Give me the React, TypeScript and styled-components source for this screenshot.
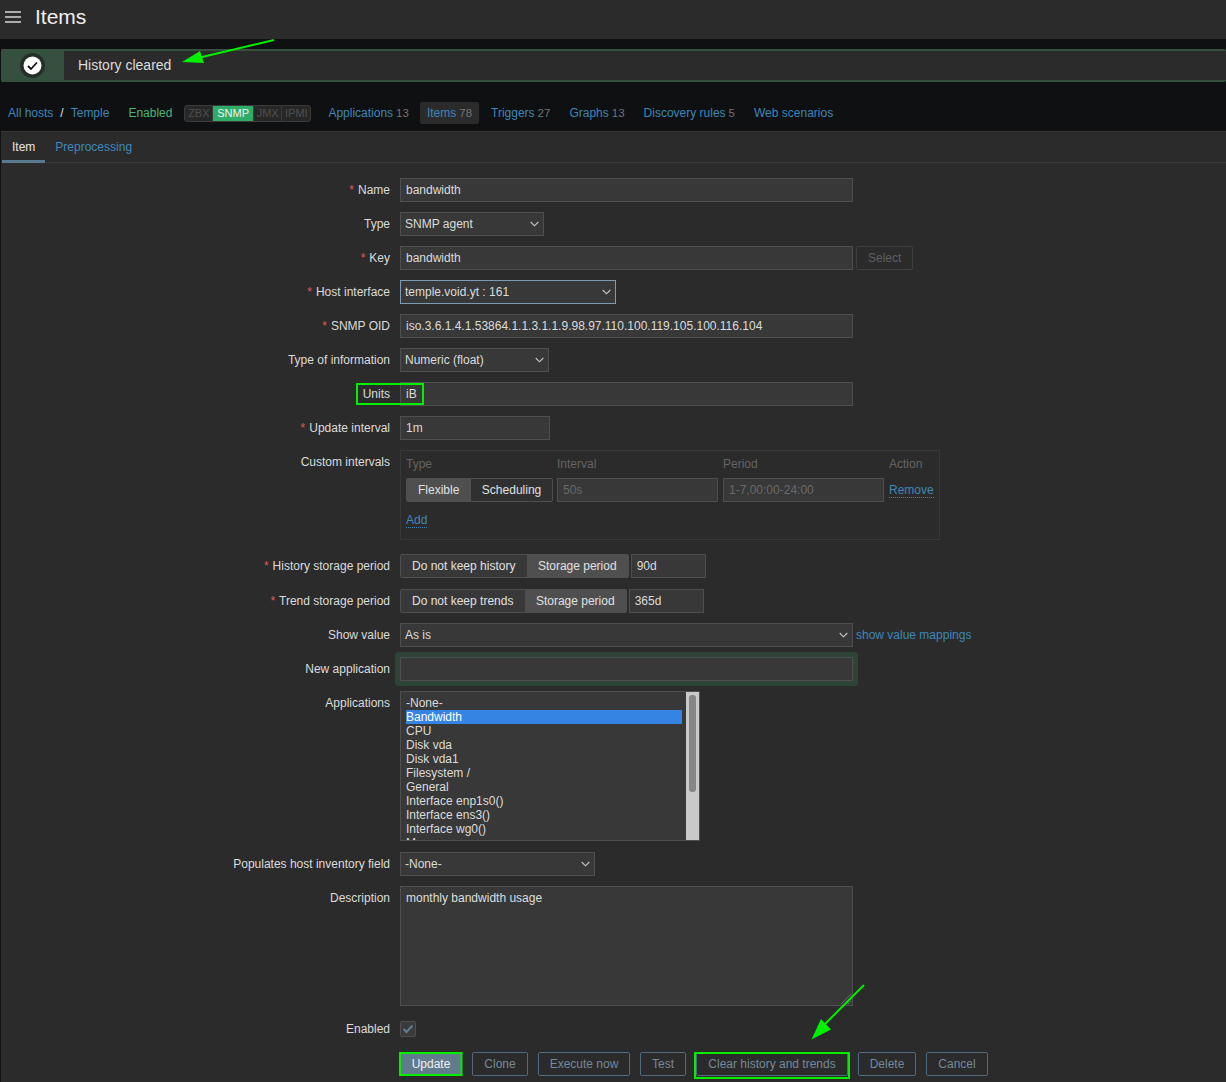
import React from "react";
import styled, { createGlobalStyle, css } from "styled-components";

const GlobalStyle = createGlobalStyle`
  html, body {
    margin: 0;
    padding: 0;
    background: #0e1012;
    overflow: hidden;
  }
  * {
    box-sizing: border-box;
  }
`;

const Page = styled.div`
  position: relative;
  width: 1226px;
  height: 1082px;
  overflow: hidden;
  background: #0e1012;
  color: #dedede;
  font-family: "Liberation Sans", Arial, sans-serif;
  font-size: 12px;
  line-height: 14px;
`;

const Header = styled.header`
  display: flex;
  align-items: center;
  height: 39px;
  padding-left: 5px;
  background: #2b2b2b;
`;

const MenuIcon = styled.svg`
  margin-bottom: 6px;
`;

const PageTitle = styled.h1`
  margin: 0 0 5px 14px;
  font-size: 21px;
  line-height: 24px;
  font-weight: normal;
  color: #f0f0f0;
`;

const Message = styled.div`
  display: flex;
  align-items: stretch;
  height: 33px;
  margin: 10px 0 0 1px;
  border: 2px solid #36503f;
  border-right: 0;
  border-radius: 2px;
  background: #2b2b2b;
`;

const MessageIcon = styled.div`
  display: flex;
  align-items: center;
  justify-content: center;
  width: 61px;
  padding-right: 2px;
  background: #36503f;
`;

const MessageText = styled.div`
  align-self: center;
  margin: 0 0 2px 14px;
  font-size: 14px;
  color: #dcdcdc;
`;

const Nav = styled.nav`
  display: flex;
  align-items: center;
  height: 22px;
  margin-top: 20px;
  padding-left: 8px;
`;

const Link = styled.a`
  color: #3f87b8;
`;

const Slash = styled.span`
  margin: 0 7px 0 7px;
  color: #e0e0e0;
`;

const EnabledState = styled.span`
  margin-left: 19px;
  color: #4fb477;
`;

const Tags = styled.div`
  display: flex;
  height: 17px;
  margin: 0 10px 0 12px;
  border: 1px solid #3a3a3a;
  border-radius: 3px;
  background: #272727;
`;

const Tag = styled.span<{ $on?: boolean }>`
  padding: 0 2.7px;
  font-size: 11px;
  line-height: 15px;
  color: #4f4f4f;
  ${(p) =>
    p.$on
      ? css`
          padding: 0 4px;
          background: #2fac68;
          color: #f2f2f2;
        `
      : css`
          & + & {
            border-left: 1px solid #3a3a3a;
          }
        `}
`;

const NavItem = styled.div<{ $active?: boolean }>`
  display: flex;
  align-items: center;
  height: 22px;
  margin-right: 5px;
  padding: 0 7px;
  border-radius: 2px;
  background: ${(p) => (p.$active ? "#2b2b2b" : "transparent")};
  ${Tags} + & {
    margin-right: 4px;
  }
`;

const Count = styled.span`
  margin-left: 3px;
  font-size: 11.5px;
  color: #727272;
`;

const Panel = styled.main`
  height: 951px;
  margin: 7px 0 0 1px;
  background: #2b2b2b;
  border-top: 1px solid #383838;
`;

const Tabs = styled.div`
  display: flex;
  height: 31px;
  padding-left: 1px;
  border-bottom: 1px solid #383838;
`;

const Tab = styled.div<{ $active?: boolean }>`
  display: flex;
  align-items: center;
  height: 31px;
  padding: 1px 10px 0;
  border-bottom: 3px solid ${(p) => (p.$active ? "#597a8e" : "transparent")};
  color: ${(p) => (p.$active ? "#e6e6e6" : "#3f87b8")};
`;

const Form = styled.form`
  display: flex;
  flex-direction: column;
  gap: 10px;
  padding-top: 15px;
`;

const Row = styled.div<{ $after?: number; $height?: number }>`
  display: grid;
  grid-template-columns: 389px 1fr;
  column-gap: 10px;
  margin-bottom: ${(p) => p.$after ?? 0}px;
  min-height: ${(p) => p.$height ?? 24}px;
`;

const Label = styled.label<{ $top?: boolean }>`
  display: flex;
  justify-content: flex-end;
  align-items: ${(p) => (p.$top ? "flex-start" : "center")};
  padding-top: ${(p) => (p.$top ? "5px" : "0")};
  height: ${(p) => (p.$top ? "auto" : "24px")};
  color: #dcdcdc;
`;

const Star = styled.span`
  margin-right: 4px;
  color: #e45959;
`;

const Field = styled.div`
  display: flex;
  align-items: flex-start;
`;

const fieldBox = css`
  height: 24px;
  border: 1px solid #4f4f4f;
  background: #383838;
  color: #dcdcdc;
`;

const Input = styled.div<{ $width: number; $disabled?: boolean; $ml?: number }>`
  ${fieldBox}
  display: flex;
  align-items: center;
  flex: none;
  width: ${(p) => p.$width}px;
  margin-left: ${(p) => p.$ml ?? 0}px;
  padding: 0 5px;
  color: ${(p) => (p.$disabled ? "#6a6a6a" : "#dcdcdc")};
`;

const GlowInput = styled(Input)`
  border-radius: 1px;
  box-shadow: 0 0 0 5px #2e4436;
`;

const Select = styled.div<{ $width: number; $focus?: boolean }>`
  ${fieldBox}
  display: flex;
  align-items: center;
  justify-content: space-between;
  width: ${(p) => p.$width}px;
  padding: 0 4px 0 4px;
  border-color: ${(p) => (p.$focus ? "#7d9cb3" : "#4f4f4f")};
`;

const GhostButton = styled.div`
  display: flex;
  align-items: center;
  height: 24px;
  margin-left: 3px;
  padding: 0 11px;
  border: 1px solid #3f3f3f;
  border-radius: 2px;
  color: #5f5f5f;
`;

const SideLink = styled.a`
  align-self: center;
  margin-left: 3px;
  color: #3f87b8;
`;

const IntervalBox = styled.div`
  display: grid;
  grid-template-columns: 151px 166px 166px auto;
  grid-template-rows: 27px 24px 37px;
  width: 540px;
  height: 90px;
  padding-left: 5px;
  border: 1px solid #383838;
  color: #646464;
`;

const ColHead = styled.div`
  align-self: center;
  padding-bottom: 2px;
`;

const DottedLink = styled.a`
  align-self: center;
  justify-self: start;
  color: #3f87b8;
  border-bottom: 1px dotted #3f87b8;
`;

const AddLink = styled(DottedLink)`
  grid-column: 1;
`;

const Segments = styled.div`
  display: flex;
  flex: none;
  height: 24px;
  border: 1px solid #4f4f4f;
  border-radius: 2px;
`;

const TypeSwitch = styled(Segments)`
  width: 147px;
`;

const Segment = styled.div<{ $on?: boolean }>`
  display: flex;
  align-items: center;
  padding: 0 11px;
  background: ${(p) => (p.$on ? "#4f4f4f" : "#383838")};
  color: #e0e0e0;
  &:first-child {
    padding-right: 11.5px;
  }
`;

const DarkSegment = styled(Segment)`
  background: ${(p) => (p.$on ? "#4f4f4f" : "#303030")};
`;

const ListBox = styled.div`
  display: flex;
  width: 300px;
  height: 150px;
  overflow: hidden;
  border: 1px solid #4f4f4f;
  background: #383838;
`;

const ListItems = styled.div`
  flex: 1;
  min-width: 0;
  padding: 4px 4px 0 5px;
`;

const ListItem = styled.div<{ $selected?: boolean }>`
  height: 14px;
  background: ${(p) => (p.$selected ? "#3584e4" : "transparent")};
  color: ${(p) => (p.$selected ? "#ffffff" : "#dcdcdc")};
`;

const ScrollTrack = styled.div`
  flex: none;
  width: 13px;
  padding: 3px 3px 0;
  background: #c9c9c9;
`;

const ScrollThumb = styled.div`
  height: 97px;
  border-radius: 3px;
  background: #868686;
`;

const TextArea = styled.div`
  position: relative;
  width: 453px;
  height: 120px;
  padding: 4px 5px;
  border: 1px solid #4f4f4f;
  background: #383838;
`;

const ResizeGrip = styled.svg`
  position: absolute;
  right: 0;
  bottom: 0;
`;

const Checkbox = styled.div`
  display: flex;
  align-items: center;
  justify-content: center;
  width: 16px;
  height: 16px;
  margin-top: 4px;
  border: 1px solid #4f4f4f;
  border-radius: 2px;
  background: #3a3a3a;
`;

const Actions = styled.div`
  display: flex;
  gap: 10px;
`;

const Action = styled.button<{ $primary?: boolean; $width: number }>`
  width: ${(p) => p.$width}px;
  height: 24px;
  padding: 0;
  border: 1px solid #4f6b7d;
  border-radius: 2px;
  background: ${(p) => (p.$primary ? "#617b8c" : "transparent")};
  color: ${(p) => (p.$primary ? "#f0f0f0" : "#74899a")};
  font: inherit;
`;

const Annotations = styled.svg`
  position: absolute;
  top: 0;
  left: 0;
  pointer-events: none;
`;

const Chevron = () => (
  <svg width="9" height="6" viewBox="0 0 9 6" fill="none">
    <path d="M.7 1l3.8 3.8L8.3 1" stroke="#c8c8c8" strokeWidth="1.1" />
  </svg>
);

const Required = ({ children }: { children: React.ReactNode }) => (
  <Label>
    <Star>*</Star>
    {children}
  </Label>
);

const applications = [
  "-None-",
  "Bandwidth",
  "CPU",
  "Disk vda",
  "Disk vda1",
  "Filesystem /",
  "General",
  "Interface enp1s0()",
  "Interface ens3()",
  "Interface wg0()",
  "Memory",
];

const actions = [
  { name: "Update", width: 62, primary: true },
  { name: "Clone", width: 56 },
  { name: "Execute now", width: 92 },
  { name: "Test", width: 46 },
  { name: "Clear history and trends", width: 152 },
  { name: "Delete", width: 58 },
  { name: "Cancel", width: 62 },
];

export default function App() {
  return (
    <Page>
      <GlobalStyle />
      <Header>
        <MenuIcon width="16" height="14" viewBox="0 0 16 14">
          <path d="M0 2h16M0 7h16M0 12h16" stroke="#d8d8d8" strokeWidth="1.6" />
        </MenuIcon>
        <PageTitle>Items</PageTitle>
      </Header>

      <Message>
        <MessageIcon>
          <svg width="25" height="25" viewBox="0 0 25 25">
            <circle cx="12.5" cy="12.5" r="12.5" fill="#233029" />
            <circle cx="12.5" cy="12.5" r="9" fill="#ffffff" />
            <path d="M8 13l3 3 6-6.5" fill="none" stroke="#111" strokeWidth="1.8" />
          </svg>
        </MessageIcon>
        <MessageText>History cleared</MessageText>
      </Message>

      <Nav>
        <Link>All hosts</Link>
        <Slash>/</Slash>
        <Link>Temple</Link>
        <EnabledState>Enabled</EnabledState>
        <Tags>
          <Tag>ZBX</Tag>
          <Tag $on>SNMP</Tag>
          <Tag>JMX</Tag>
          <Tag>IPMI</Tag>
        </Tags>
        <NavItem>
          <Link>Applications</Link>
          <Count>13</Count>
        </NavItem>
        <NavItem $active>
          <Link>Items</Link>
          <Count>78</Count>
        </NavItem>
        <NavItem>
          <Link>Triggers</Link>
          <Count>27</Count>
        </NavItem>
        <NavItem>
          <Link>Graphs</Link>
          <Count>13</Count>
        </NavItem>
        <NavItem>
          <Link>Discovery rules</Link>
          <Count>5</Count>
        </NavItem>
        <NavItem>
          <Link>Web scenarios</Link>
        </NavItem>
      </Nav>

      <Panel>
        <Tabs>
          <Tab $active>Item</Tab>
          <Tab>Preprocessing</Tab>
        </Tabs>
        <Form>
          <Row>
            <Required>Name</Required>
            <Field>
              <Input $width={453}>bandwidth</Input>
            </Field>
          </Row>
          <Row>
            <Label>Type</Label>
            <Field>
              <Select $width={144}>
                SNMP agent
                <Chevron />
              </Select>
            </Field>
          </Row>
          <Row>
            <Required>Key</Required>
            <Field>
              <Input $width={453}>bandwidth</Input>
              <GhostButton>Select</GhostButton>
            </Field>
          </Row>
          <Row>
            <Required>Host interface</Required>
            <Field>
              <Select $width={216} $focus>
                temple.void.yt : 161
                <Chevron />
              </Select>
            </Field>
          </Row>
          <Row>
            <Required>SNMP OID</Required>
            <Field>
              <Input $width={453}>iso.3.6.1.4.1.53864.1.1.3.1.1.9.98.97.110.100.119.105.100.116.104</Input>
            </Field>
          </Row>
          <Row>
            <Label>Type of information</Label>
            <Field>
              <Select $width={149}>
                Numeric (float)
                <Chevron />
              </Select>
            </Field>
          </Row>
          <Row>
            <Label>Units</Label>
            <Field>
              <Input $width={453}>iB</Input>
            </Field>
          </Row>
          <Row>
            <Required>Update interval</Required>
            <Field>
              <Input $width={150}>1m</Input>
            </Field>
          </Row>
          <Row $after={4}>
            <Label $top>Custom intervals</Label>
            <IntervalBox>
              <ColHead>Type</ColHead>
              <ColHead>Interval</ColHead>
              <ColHead>Period</ColHead>
              <ColHead>Action</ColHead>
              <TypeSwitch>
                <Segment $on>Flexible</Segment>
                <DarkSegment>Scheduling</DarkSegment>
              </TypeSwitch>
              <Input $width={161} $disabled>
                50s
              </Input>
              <Input $width={161} $disabled>
                1-7,00:00-24:00
              </Input>
              <DottedLink>Remove</DottedLink>
              <AddLink>Add</AddLink>
            </IntervalBox>
          </Row>
          <Row $height={25}>
            <Required>History storage period</Required>
            <Field>
              <Segments>
                <Segment>Do not keep history</Segment>
                <Segment $on>Storage period</Segment>
              </Segments>
              <Input $width={75} $ml={2}>
                90d
              </Input>
            </Field>
          </Row>
          <Row>
            <Required>Trend storage period</Required>
            <Field>
              <Segments>
                <Segment>Do not keep trends</Segment>
                <Segment $on>Storage period</Segment>
              </Segments>
              <Input $width={75} $ml={2}>
                365d
              </Input>
            </Field>
          </Row>
          <Row>
            <Label>Show value</Label>
            <Field>
              <Select $width={453}>
                As is
                <Chevron />
              </Select>
              <SideLink>show value mappings</SideLink>
            </Field>
          </Row>
          <Row>
            <Label>New application</Label>
            <Field>
              <GlowInput $width={453} />
            </Field>
          </Row>
          <Row $after={1}>
            <Label $top>Applications</Label>
            <ListBox>
              <ListItems>
                {applications.map((name) => (
                  <ListItem key={name} $selected={name === "Bandwidth"}>
                    {name}
                  </ListItem>
                ))}
              </ListItems>
              <ScrollTrack>
                <ScrollThumb />
              </ScrollTrack>
            </ListBox>
          </Row>
          <Row>
            <Label>Populates host inventory field</Label>
            <Field>
              <Select $width={195}>
                -None-
                <Chevron />
              </Select>
            </Field>
          </Row>
          <Row $after={1}>
            <Label $top>Description</Label>
            <TextArea>
              monthly bandwidth usage
              <ResizeGrip width="12" height="12" viewBox="0 0 12 12">
                <path d="M1 11L11 1M5 11l6-6M8 11l3-3" stroke="#666" strokeWidth="1" />
              </ResizeGrip>
            </TextArea>
          </Row>
          <Row $after={1}>
            <Label>Enabled</Label>
            <Field>
              <Checkbox>
                <svg width="12" height="10" viewBox="0 0 12 10" fill="none">
                  <path d="M1.5 5l3 3 6-6.5" stroke="#5f7d92" strokeWidth="2" />
                </svg>
              </Checkbox>
            </Field>
          </Row>
          <Row>
            <span />
            <Actions>
              {actions.map((a) => (
                <Action key={a.name} $width={a.width} $primary={a.primary}>
                  {a.name}
                </Action>
              ))}
            </Actions>
          </Row>
        </Form>
      </Panel>

      <Annotations width="1226" height="1082" viewBox="0 0 1226 1082">
        <g fill="none" stroke="#00f000" strokeWidth="2">
          <rect x="357" y="384" width="66" height="20" />
          <rect x="400" y="1053" width="61.5" height="22" />
          <rect x="695" y="1053" width="154" height="25" />
          <path d="M274 40L200 57.5" />
          <path d="M864 985L825 1024" />
        </g>
        <path d="M182 62L200 51L204 63Z" fill="#00f000" />
        <path d="M811.5 1039.5L821 1019L831 1029.5Z" fill="#00f000" />
      </Annotations>
    </Page>
  );
}
